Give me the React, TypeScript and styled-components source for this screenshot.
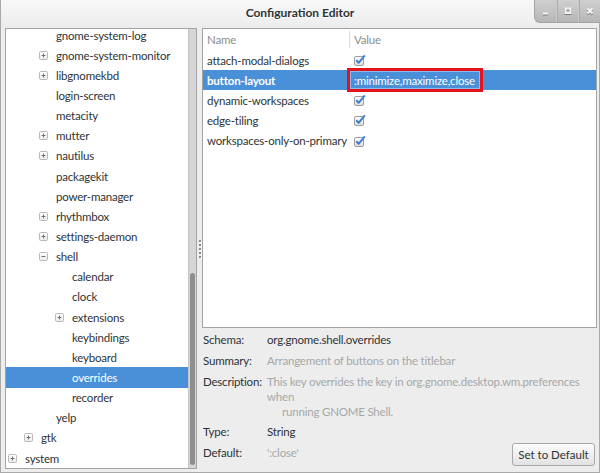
import React, { useLayoutEffect, useRef } from "react";
import styled, { createGlobalStyle } from "styled-components";

const Global = createGlobalStyle`
  html, body { margin: 0; padding: 0; }
  body {
    width: 600px; height: 473px; overflow: hidden;
    background: #ededed;
    font-family: Lato, "Noto Sans", sans-serif;
    font-size: 11.5px;
    letter-spacing: -0.2px;
    color: #2e3436;
  }
`;

const ROW_H = 20.15;

const Window = styled.div`
  width: 600px;
  height: 473px;
  box-sizing: border-box;
  display: flex;
  flex-direction: column;
  background: #ededed;
  border-left: 1px solid #a9a9a9;
  border-right: 1px solid #a9a9a9;
  border-bottom: 1px solid #a9a9a9;
`;

const TitleBar = styled.header`
  height: 28px;
  flex: none;
  display: grid;
  grid-template-columns: 1fr auto 1fr;
  background: linear-gradient(#f8f8f8, #ececec);
`;

const Title = styled.h1`
  grid-column: 2;
  margin: 0;
  align-self: center;
  padding-bottom: 3px;
  font-size: 12px;
  letter-spacing: 0;
  font-weight: bold;
  color: #2e3436;
  text-shadow: 0 1px #ffffff;
`;

const WinButtons = styled.div`
  grid-column: 3;
  justify-self: end;
  align-self: start;
  display: flex;
  height: 22px;
  margin-right: -1px;
  background: linear-gradient(#d0d0d0, #b6b6b6);
  border-left: 1px solid #a4a4a4;
  border-bottom: 1px solid #a4a4a4;
  border-bottom-left-radius: 6px;
  overflow: hidden;
`;

const WinButton = styled.div`
  width: 21px;
  display: flex;
  align-items: center;
  justify-content: center;
  & + & { border-left: 1px solid #c9c9c9; box-shadow: inset 1px 0 #adadad; }
`;

const Body = styled.div`
  flex: 1;
  min-height: 0;
  display: flex;
  padding: 0 2px 3px 4px;
`;

const TreeFrame = styled.div`
  width: 192px;
  flex: none;
  box-sizing: border-box;
  border: 1px solid #a3a3a3;
  background: #ffffff;
  display: flex;
`;

const TreeScroll = styled.div`
  flex: 1;
  overflow: hidden;
`;

const TreeRow = styled.div<{ $level: number; $selected?: boolean }>`
  height: ${ROW_H}px;
  display: flex;
  align-items: center;
  padding-left: ${(p) => 2 + Math.round(p.$level * 15.67)}px;
  background: ${(p) => (p.$selected ? "#4a90d9" : "transparent")};
  color: ${(p) => (p.$selected ? "#ffffff" : "#2e3436")};
  white-space: nowrap;
`;

const ExpanderSlot = styled.span`
  width: 9px;
  height: 9px;
  margin-right: 8px;
  flex: none;
  display: flex;
`;

const ScrollTrack = styled.div`
  width: 8px;
  flex: none;
  display: flex;
  flex-direction: column;
  justify-content: flex-end;
  padding-bottom: 3px;
  box-sizing: border-box;
  background: #d6d6d6;
  border-left: 1px solid #c4c4c4;
`;

const ScrollThumb = styled.div`
  height: 192px;
  margin: 0 1px;
  border-radius: 3px;
  background: #8e8e8e;
`;

const Handle = styled.div`
  width: 4px;
  flex: none;
  display: flex;
  flex-direction: column;
  align-items: center;
  justify-content: center;
  gap: 2px;
  padding-left: 1px;
`;

const Dot = styled.span`
  width: 2px;
  height: 2px;
  background: #8c8c8c;
  box-shadow: 1px 1px #ffffff;
`;

const RightPane = styled.div`
  flex: 1;
  min-width: 0;
  display: flex;
  flex-direction: column;
`;

const KeysFrame = styled.div`
  height: 300px;
  flex: none;
  box-sizing: border-box;
  border: 1px solid #a3a3a3;
  background: #ffffff;
`;

const HeaderRow = styled.div`
  height: 21px;
  display: flex;
  color: #8b8e8f;
`;

const NameCell = styled.div<{ $bold?: boolean }>`
  width: 146px;
  flex: none;
  box-sizing: border-box;
  padding-left: 4px;
  display: flex;
  align-items: center;
  white-space: nowrap;
  font-weight: ${(p) => (p.$bold ? "bold" : "normal")};
`;

const ValueCell = styled.div<{ $head?: boolean }>`
  flex: 1;
  display: flex;
  align-items: center;
  padding-left: 4px;
  border-left: 1px solid ${(p) => (p.$head ? "#dcdcdc" : "transparent")};
  margin: ${(p) => (p.$head ? "2px 0" : "0")};
`;

const KeyRow = styled.div<{ $selected?: boolean }>`
  height: ${ROW_H}px;
  display: flex;
  background: ${(p) => (p.$selected ? "#4a90d9" : "transparent")};
  color: ${(p) => (p.$selected ? "#ffffff" : "#2e3436")};
`;

const EditedValue = styled.span`
  height: 18px;
  box-sizing: border-box;
  display: flex;
  align-items: center;
  margin-left: -4px;
  padding: 0 4px 0 3px;
  border: 1px solid #8cb8ea;
  box-shadow: 0 0 0 3px #e2131f;
  color: #ffffff;
  white-space: nowrap;
`;

const Info = styled.div`
  flex: 1;
  display: flex;
  flex-direction: column;
  padding: 1px 0 0 1px;
`;

const InfoRow = styled.div<{ $multi?: boolean }>`
  display: flex;
  align-items: flex-start;
  line-height: ${(p) => (p.$multi ? "15px" : "21px")};
  padding: ${(p) => (p.$multi ? "3px 0 2px" : "0")};
`;

const InfoLabel = styled.div`
  width: 64px;
  flex: none;
  color: #2e3436;
  white-space: nowrap;
`;

const InfoValue = styled.div<{ $dim?: boolean }>`
  flex: 1;
  color: ${(p) => (p.$dim ? "#a5a8a9" : "#2e3436")};
  white-space: nowrap;
`;

const Indented = styled.span`
  padding-left: 15px;
`;

const DefaultButton = styled.button`
  margin: 1px 2px 0 auto;
  height: 23px;
  width: 83px;
  padding: 0;
  font: inherit;
  color: #2e3436;
  border: 1px solid #a8a8a8;
  border-radius: 3px;
  background: linear-gradient(#fcfcfc, #e2e2e2);
  box-shadow: inset 0 1px #ffffff;
`;

type Node = { label: string; level: number; exp?: "plus" | "minus"; selected?: boolean };

const tree: Node[] = [
  { label: "gnome-system-log", level: 2 },
  { label: "gnome-system-monitor", level: 2, exp: "plus" },
  { label: "libgnomekbd", level: 2, exp: "plus" },
  { label: "login-screen", level: 2 },
  { label: "metacity", level: 2 },
  { label: "mutter", level: 2, exp: "plus" },
  { label: "nautilus", level: 2, exp: "plus" },
  { label: "packagekit", level: 2 },
  { label: "power-manager", level: 2 },
  { label: "rhythmbox", level: 2, exp: "plus" },
  { label: "settings-daemon", level: 2, exp: "plus" },
  { label: "shell", level: 2, exp: "minus" },
  { label: "calendar", level: 3 },
  { label: "clock", level: 3 },
  { label: "extensions", level: 3, exp: "plus" },
  { label: "keybindings", level: 3 },
  { label: "keyboard", level: 3 },
  { label: "overrides", level: 3, selected: true },
  { label: "recorder", level: 3 },
  { label: "yelp", level: 2 },
  { label: "gtk", level: 1, exp: "plus" },
  { label: "system", level: 0, exp: "plus" },
];

type Key = { name: string; check?: boolean; value?: string; selected?: boolean };

const keys: Key[] = [
  { name: "attach-modal-dialogs", check: true },
  { name: "button-layout", value: ":minimize,maximize,close", selected: true },
  { name: "dynamic-workspaces", check: true },
  { name: "edge-tiling", check: true },
  { name: "workspaces-only-on-primary", check: true },
];

function ExpanderIcon({ kind }: { kind: "plus" | "minus" }) {
  return (
    <svg width="9" height="9" viewBox="0 0 9 9">
      <defs>
        <linearGradient id="expg" x1="0" y1="0" x2="0" y2="1">
          <stop offset="0" stopColor="#ffffff" />
          <stop offset="1" stopColor="#ececec" />
        </linearGradient>
      </defs>
      <rect x="0.5" y="0.5" width="8" height="8" rx="1.2" fill="url(#expg)" stroke="#b9b9b9" />
      <path d="M2.5 4.5h4" stroke="#6f7374" strokeWidth="1" />
      {kind === "plus" && <path d="M4.5 2.5v4" stroke="#6f7374" strokeWidth="1" />}
    </svg>
  );
}

function CheckIcon() {
  return (
    <svg width="12" height="12" viewBox="0 0 12 12">
      <defs>
        <linearGradient id="chkg" x1="0" y1="0" x2="0" y2="1">
          <stop offset="0" stopColor="#ffffff" />
          <stop offset="1" stopColor="#dcdcdc" />
        </linearGradient>
      </defs>
      <rect x="0.5" y="2.5" width="9" height="9" rx="1.5" fill="url(#chkg)" stroke="#9d9d9d" />
      <path d="M2.3 6.3 L4.6 8.8 L10.8 1.4" fill="none" stroke="#3f7fcf" strokeWidth="2" strokeLinejoin="round" />
    </svg>
  );
}

function WinGlyph({ kind }: { kind: "min" | "max" | "close" }) {
  const shape = (color: string) => (
    <>
      {kind === "min" && <path d="M2 7.5h5" stroke={color} />}
      {kind === "max" && <rect x="2.5" y="2.5" width="5" height="4.5" stroke={color} />}
      {kind === "close" && <path d="M2.5 2.5l5 5M7.5 2.5l-5 5" stroke={color} />}
    </>
  );
  return (
    <svg width="10" height="10" viewBox="0 0 10 10">
      <g transform="translate(0,1)" fill="none" strokeWidth="2">{shape("#7a7a7a")}</g>
      <g fill="none" strokeWidth="2">{shape("#f4f4f4")}</g>
    </svg>
  );
}

export default function App() {
  const scrollRef = useRef<HTMLDivElement>(null);

  useLayoutEffect(() => {
    const el = scrollRef.current;
    if (el) el.scrollTop = el.scrollHeight - el.clientHeight;
  }, []);

  return (
    <>
      <Global />
      <Window>
        <TitleBar>
          <Title>Configuration Editor</Title>
          <WinButtons>
            <WinButton><WinGlyph kind="min" /></WinButton>
            <WinButton><WinGlyph kind="max" /></WinButton>
            <WinButton><WinGlyph kind="close" /></WinButton>
          </WinButtons>
        </TitleBar>
        <Body>
          <TreeFrame>
            <TreeScroll ref={scrollRef}>
              {tree.map((n, i) => (
                <TreeRow key={i} $level={n.level} $selected={n.selected}>
                  <ExpanderSlot>{n.exp && <ExpanderIcon kind={n.exp} />}</ExpanderSlot>
                  {n.label}
                </TreeRow>
              ))}
            </TreeScroll>
            <ScrollTrack>
              <ScrollThumb />
            </ScrollTrack>
          </TreeFrame>
          <Handle>
            <Dot /><Dot /><Dot /><Dot /><Dot />
          </Handle>
          <RightPane>
            <KeysFrame>
              <HeaderRow>
                <NameCell>Name</NameCell>
                <ValueCell $head>Value</ValueCell>
              </HeaderRow>
              {keys.map((k) => (
                <KeyRow key={k.name} $selected={k.selected}>
                  <NameCell $bold={k.selected}>{k.name}</NameCell>
                  <ValueCell>
                    {k.check && <CheckIcon />}
                    {k.value && <EditedValue>{k.value}</EditedValue>}
                  </ValueCell>
                </KeyRow>
              ))}
            </KeysFrame>
            <Info>
              <InfoRow>
                <InfoLabel>Schema:</InfoLabel>
                <InfoValue>org.gnome.shell.overrides</InfoValue>
              </InfoRow>
              <InfoRow>
                <InfoLabel>Summary:</InfoLabel>
                <InfoValue $dim>Arrangement of buttons on the titlebar</InfoValue>
              </InfoRow>
              <InfoRow $multi>
                <InfoLabel>Description:</InfoLabel>
                <InfoValue $dim>
                  This key overrides the key in org.gnome.desktop.wm.preferences
                  <br />
                  when
                  <br />
                  <Indented>running GNOME Shell.</Indented>
                </InfoValue>
              </InfoRow>
              <InfoRow>
                <InfoLabel>Type:</InfoLabel>
                <InfoValue>String</InfoValue>
              </InfoRow>
              <InfoRow>
                <InfoLabel>Default:</InfoLabel>
                <InfoValue $dim>':close'</InfoValue>
                <DefaultButton>Set to Default</DefaultButton>
              </InfoRow>
            </Info>
          </RightPane>
        </Body>
      </Window>
    </>
  );
}
